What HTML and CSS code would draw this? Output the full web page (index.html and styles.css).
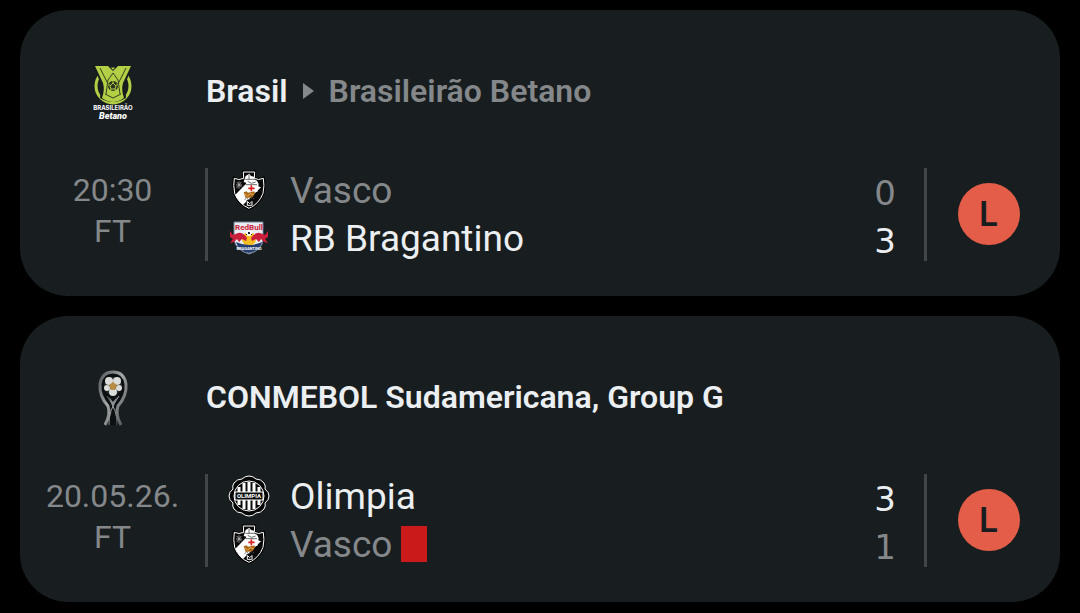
FILE: index.html
```html
<!DOCTYPE html>
<html lang="en">
<head>
    <meta charset="UTF-8" />
    <meta name="viewport" content="width=device-width, initial-scale=1" />
    <title>Vasco results</title>
    <link rel="stylesheet" href="styles.css">
</head>
<body>

<!-- ───── Club crests used more than once ───── -->
<svg class="defs" width="0" height="0" aria-hidden="true">
    <defs>
        <clipPath id="vascoShape">
            <path d="M43 12H77L76 31Q89 38 103 31Q107 52 102 76Q90 108 60 121Q29 108 17 76Q12 52 16 31Q30 38 44 31Z" />
        </clipPath>
        <symbol id="vasco" viewBox="0 0 120 132">
            <path d="M43 12H77L76 31Q89 38 103 31Q107 52 102 76Q90 108 60 121Q29 108 17 76Q12 52 16 31Q30 38 44 31Z" fill="#0a0a0b" stroke="#000" stroke-width="9" />
            <path d="M43 12H77L76 31Q89 38 103 31Q107 52 102 76Q90 108 60 121Q29 108 17 76Q12 52 16 31Q30 38 44 31Z" fill="#0a0a0b" stroke="#fff" stroke-width="3" />
            <g clip-path="url(#vascoShape)">
                <path d="M10 90L54 44L96 58L30 122Z" fill="#fff" />
            </g>
            <path d="M50 24L61 17L66 24L75 26V34L84 38L89 48L85 72Q68 68 53 74L48 64L52 44L44 42Z" fill="#fff" />
            <path d="M49 34H75M56 40L68 46L80 42M60 20V34M50 50H84" stroke="#222" stroke-width="2" fill="none" />
            <path d="M67 52V70M58 61H77" stroke="#d8201e" stroke-width="5" />
            <path d="M44 73L52 70L57 74L76 70L78 76L71 88L50 90Z" fill="#a96717" />
            <path d="M47 77L56 84L64 77L74 80" stroke="#eeb257" stroke-width="3" fill="none" />
            <path d="M47 94L53 91L60 95L68 90L78 93" stroke="#4a4a4a" stroke-width="3" stroke-dasharray="4 3" fill="none" />
            <path d="M52 97H72L69 116H56Z" fill="#0a0a0b" />
            <path d="M23 42L38 58M37 42L23 60M21 51H39M30 40V62" stroke="#ccc" stroke-width="2" />
            <path d="M55 100V113M69 100V113M56 101L62 107L68 101M56 112H68" stroke="#fff" stroke-width="3" fill="none" />
        </symbol>
    </defs>
</svg>

<main class="feed">

    <!-- ───── Brasileirão ───── -->
    <section class="card">
        <header class="league">
            <span class="league-logo">
                <svg viewBox="0 0 66 70" width="66" height="70" role="img" aria-label="Brasileirão Betano">
                    <circle cx="33" cy="30" r="17" fill="none" stroke="#b2cf45" stroke-width="3" />
                    <path d="M13 9H29L33 14L37 9H53L45 28L46 42Q33 50 20 42L21 28Z" fill="#181c1e" />
                    <path d="M15 10H28L33 15L38 10H51L43 27Q41 34 44 42Q33 50 22 42Q25 34 23 27Z" fill="#b2cf45" />
                    <path d="M20 12L28 28M46 12L38 28M33 17L28 24L26 38M33 17L38 24L40 38M25 38L33 42L41 38" stroke="#34401f" stroke-width="1" fill="none" />
                    <circle cx="33" cy="30" r="5" fill="#2b361f" />
                    <path d="M33 27L36 30L35 33H31L30 30ZM33 25V27M28 29H30M38 29H36M30 35L31 33M36 35L35 33" fill="none" stroke="#b2cf45" stroke-width="1" />
                    <text x="33" y="54" class="logo-league">BRASILEIRÃO</text>
                    <text x="33" y="63" class="logo-sponsor">Betano</text>
                </svg>
            </span>
            <h2 class="league-name">
                <span>Brasil</span>
                <svg class="arrow" viewBox="0 0 11 16" width="11" height="16" aria-hidden="true"><path d="M0 0L11 8L0 16Z" fill="#85888a" /></svg>
                <span class="muted">Brasileirão Betano</span>
            </h2>
        </header>

        <div class="match">
            <div class="when"><time>20:30</time><span>FT</span></div>
            <div class="divider"></div>
            <div class="teams">
                <div class="team muted">
                    <span class="crest"><svg width="40" height="44" role="img" aria-label="Vasco crest"><use href="#vasco" /></svg></span>
                    <span class="name">Vasco</span>
                    <span class="score">0</span>
                </div>
                <div class="team">
                    <span class="crest">
                        <svg viewBox="0 0 40 34" width="40" height="34" role="img" aria-label="RB Bragantino crest">
                            <path d="M5 1H34V19Q33 29 20 33Q7 29 5 19Z" fill="#e9edf1" stroke="#707e97" stroke-width="1" />
                            <circle cx="20" cy="18" r="7" fill="#f6bd23" />
                            <path d="M7 21Q20 27 33 21Q31 30 20 32Q9 30 7 21Z" fill="#263f70" />
                            <path d="M14 20Q20 27 26 20Z" fill="#f6bd23" />
                            <text x="20" y="9" class="logo-bull">RedBull</text>
                            <path id="bull" d="M1 10L4 14L9 12Q14 11 18 17L17 20L13 18L10 21L8 18L5 21L1 22L4 18L1 16Z" fill="#c91f3a" />
                            <use href="#bull" transform="matrix(-1 0 0 1 40 0)" />
                            <circle cx="20" cy="12" r="3" fill="#fff" />
                            <path d="M19 11H21V13H19ZM17 13H18V14H17ZM22 13H23V14H22Z" fill="#1b2333" />
                            <text x="20" y="29" class="logo-city">BRAGANTINO</text>
                        </svg>
                    </span>
                    <span class="name">RB Bragantino</span>
                    <span class="score">3</span>
                </div>
            </div>
            <div class="divider"></div>
            <div class="result"><span class="badge">L</span></div>
        </div>
    </section>

    <!-- ───── Sudamericana ───── -->
    <section class="card">
        <header class="league">
            <span class="league-logo">
                <svg viewBox="0 0 66 70" width="66" height="70" role="img" aria-label="CONMEBOL Sudamericana">
                    <defs>
                        <linearGradient id="silver" x1="0" x2="1" y1="0" y2="1">
                            <stop offset="0" stop-color="#55595b" />
                            <stop offset=".45" stop-color="#a4a6a7" />
                            <stop offset="1" stop-color="#4d5153" />
                        </linearGradient>
                    </defs>
                    <path d="M25 63Q31 52 28 44Q19 34 20 22Q22 10 33 10Q44 10 46 22Q47 34 38 44Q35 52 41 63" fill="#0d1012" stroke="url(#silver)" stroke-width="3" />
                    <path d="M27 34Q38 49 37 63M39 34Q28 49 29 63" fill="none" stroke="url(#silver)" stroke-width="1" />
                    <path d="M29 35L33 40L37 35L33 46Z" fill="#8d9192" />
                    <circle cx="33" cy="24" r="9" fill="#24282a" />
                    <g fill="#dcdcda">
                        <circle cx="29" cy="19" r="4" />
                        <circle cx="37" cy="19" r="4" />
                        <circle cx="27" cy="26" r="3" />
                        <circle cx="39" cy="26" r="3" />
                        <circle cx="33" cy="30" r="4" />
                    </g>
                    <path d="M33 20L37 23L35 28H31L29 23Z" fill="#b78d46" />
                </svg>
            </span>
            <h2 class="league-name">CONMEBOL Sudamericana, Group G</h2>
        </header>

        <div class="match">
            <div class="when"><time datetime="2026-05-20">20.05.26.</time><span>FT</span></div>
            <div class="divider"></div>
            <div class="teams">
                <div class="team">
                    <span class="crest">
                        <svg viewBox="0 0 42 42" width="42" height="42" role="img" aria-label="Olimpia crest">
                            <path d="M21 1Q25 1 28 4Q33 4 36 8Q38 11 37 14Q41 17 41 21Q41 25 37 28Q38 31 36 34Q33 38 28 38Q25 41 21 41Q17 41 14 38Q9 38 6 34Q4 31 5 28Q1 25 1 21Q1 17 5 14Q4 11 6 8Q9 4 14 4Q17 1 21 1Z" fill="#050505" stroke="#fff" stroke-width="1" />
                            <circle cx="21" cy="21" r="15" fill="#0a0a0a" stroke="#fff" stroke-width="1" />
                            <path d="M11 12V30M16 8V34M21 7V35M26 8V34M31 12V30" stroke="#fff" stroke-width="3" />
                            <path d="M7 17H35V25H7Z" fill="#0a0a0a" stroke="#fff" stroke-width="1" />
                            <text x="21" y="23" class="logo-olimpia">OLIMPIA</text>
                        </svg>
                    </span>
                    <span class="name">Olimpia</span>
                    <span class="score">3</span>
                </div>
                <div class="team muted">
                    <span class="crest"><svg width="40" height="44" role="img" aria-label="Vasco crest"><use href="#vasco" /></svg></span>
                    <span class="name">Vasco</span>
                    <span class="red-card" role="img" aria-label="Red card"></span>
                    <span class="score">1</span>
                </div>
            </div>
            <div class="divider"></div>
            <div class="result"><span class="badge">L</span></div>
        </div>
    </section>

</main>
</body>
</html>
```
FILE: styles.css
```css
:root {
    --card: #181d1f;
    --text: #eceff1;
    --muted: #85888a;
    --line: #424648;
    --loss: #e45d48;
}
* { box-sizing: border-box; }

body {
    margin: 0;
    padding: 10px 20px;
    background: #000;
    color: var(--text);
    font-family: Roboto, "Liberation Sans", sans-serif;
}
.defs { position: absolute; }

.feed {
    display: flex;
    flex-direction: column;
    gap: 20px;
}
.card {
    padding: 46px 10px 34px 0;
    border-radius: 48px;
    background: var(--card);
}
.muted { color: var(--muted); }

/* ────────── League title ────────── */
.league {
    display: flex;
    align-items: center;
    margin-bottom: 40px;
}
.league-logo {
    flex: 0 0 186px;
    display: flex;
    justify-content: center;
}
.league-name {
    display: flex;
    align-items: center;
    gap: 15px;
    margin: 0;
    font-size: 32px;
    line-height: 40px;
    font-weight: 600;
}

/* ────────── Match row ────────── */
.match {
    display: flex;
    align-items: center;
}
.when {
    flex: 0 0 185px;
    display: flex;
    flex-direction: column;
    align-items: center;
    padding-bottom: 6px;
    font-size: 32px;
    line-height: 41px;
    color: var(--muted);
}
.divider {
    flex: 0 0 3px;
    height: 93px;
    background: var(--line);
}
.teams {
    flex: 1;
    min-width: 0;
    padding: 0 28px 0 20px;
}
.team {
    display: flex;
    align-items: center;
    height: 48px;
    font-size: 37px;
    line-height: 48px;
}
.crest {
    flex: 0 0 42px;
    display: flex;
    justify-content: center;
    margin-right: 20px;
}
.name { padding-top: 2px; }
.red-card {
    width: 26px;
    height: 36px;
    margin-left: 9px;
    background: #cb1a1a;
}
.score {
    margin-left: auto;
    padding-top: 6px;
    font-family: "DejaVu Sans", sans-serif;
    font-size: 34px;
    line-height: 44px;
}
.result {
    flex: 0 0 123px;
    display: flex;
    justify-content: center;
}
.badge {
    width: 62px;
    height: 62px;
    border-radius: 50%;
    background: var(--loss);
    color: var(--card);
    font-family: Inter, sans-serif;
    font-size: 34px;
    line-height: 62px;
    font-weight: 600;
    text-align: center;
}

/* ────────── Lettering inside the logos ────────── */
.logo-league,
.logo-sponsor,
.logo-bull,
.logo-city,
.logo-olimpia {
    text-anchor: middle;
    font-weight: 700;
    fill: #fff;
}
.logo-league { 
    font-family: Inter, sans-serif;
    font-size: 6px;
}
.logo-sponsor {
    font-size: 9px;
    font-weight: 900;
    font-style: italic;
}
.logo-bull {
    font-size: 8px;
    fill: #c91f3a;
}
.logo-city { font-size: 4px; }
.logo-olimpia { font-size: 6px; }
```
